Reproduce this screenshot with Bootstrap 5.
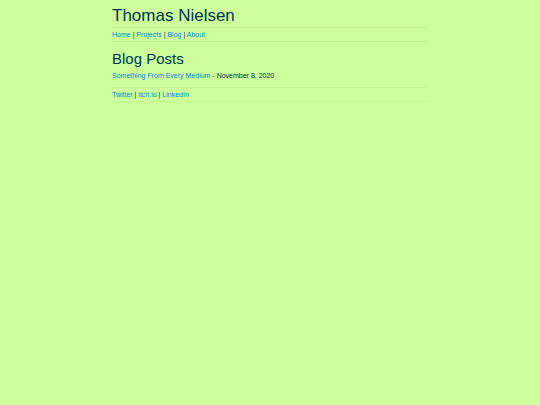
<!DOCTYPE html>
<html lang="en">
<head>
  <meta charset="UTF-8">
  <meta name="viewport" content="width=device-width, initial-scale=1">
  <title>Thomas Nielsen</title>
  <link rel="stylesheet" href="https://cdn.jsdelivr.net/npm/bootstrap@5.3.0/dist/css/bootstrap.min.css">
  <style>
    body {
      background-color: #ccff99;
      color: #003344;
      font-family: "Liberation Sans", Arial, sans-serif;
      font-size: 7px;
      line-height: 11px;
    }
    .page {
      max-width: 316px;
    }
    h1, h2 {
      font-weight: 400;
      color: #003355;
    }
    h1 {
      font-size: 17px;
      line-height: 23px;
    }
    h2 {
      font-size: 15px;
      line-height: 18px;
    }
    a {
      color: #0088dd;
      text-decoration: none;
    }
    a:hover {
      text-decoration: underline;
    }
    .bar {
      padding: 1px 0;
      border-top: 1px solid #bff292;
      border-bottom: 1px solid #bff292;
    }
    .bar-footer {
      border-color: #c3f694;
    }
    .post {
      margin: 2px 0 6px;
    }
  </style>
</head>
<body>
  <div class="page mx-auto pt-1">
    <header>
      <h1 class="mb-0">Thomas Nielsen</h1>
      <nav class="bar">
        <a href="#">Home</a> |
        <a href="#">Projects</a> |
        <a href="#">Blog</a> |
        <a href="#">About</a>
      </nav>
    </header>

    <main class="pt-2">
      <h2 class="mb-0">Blog Posts</h2>
      <p class="post"><a href="#">Something From Every Medium</a> - November 8, 2020</p>
    </main>

    <footer class="bar bar-footer">
      <a href="#">Twitter</a> |
      <a href="#">itch.io</a> |
      <a href="#">LinkedIn</a>
    </footer>
  </div>

  <script src="https://cdn.jsdelivr.net/npm/bootstrap@5.3.0/dist/js/bootstrap.bundle.min.js"></script>
</body>
</html>
